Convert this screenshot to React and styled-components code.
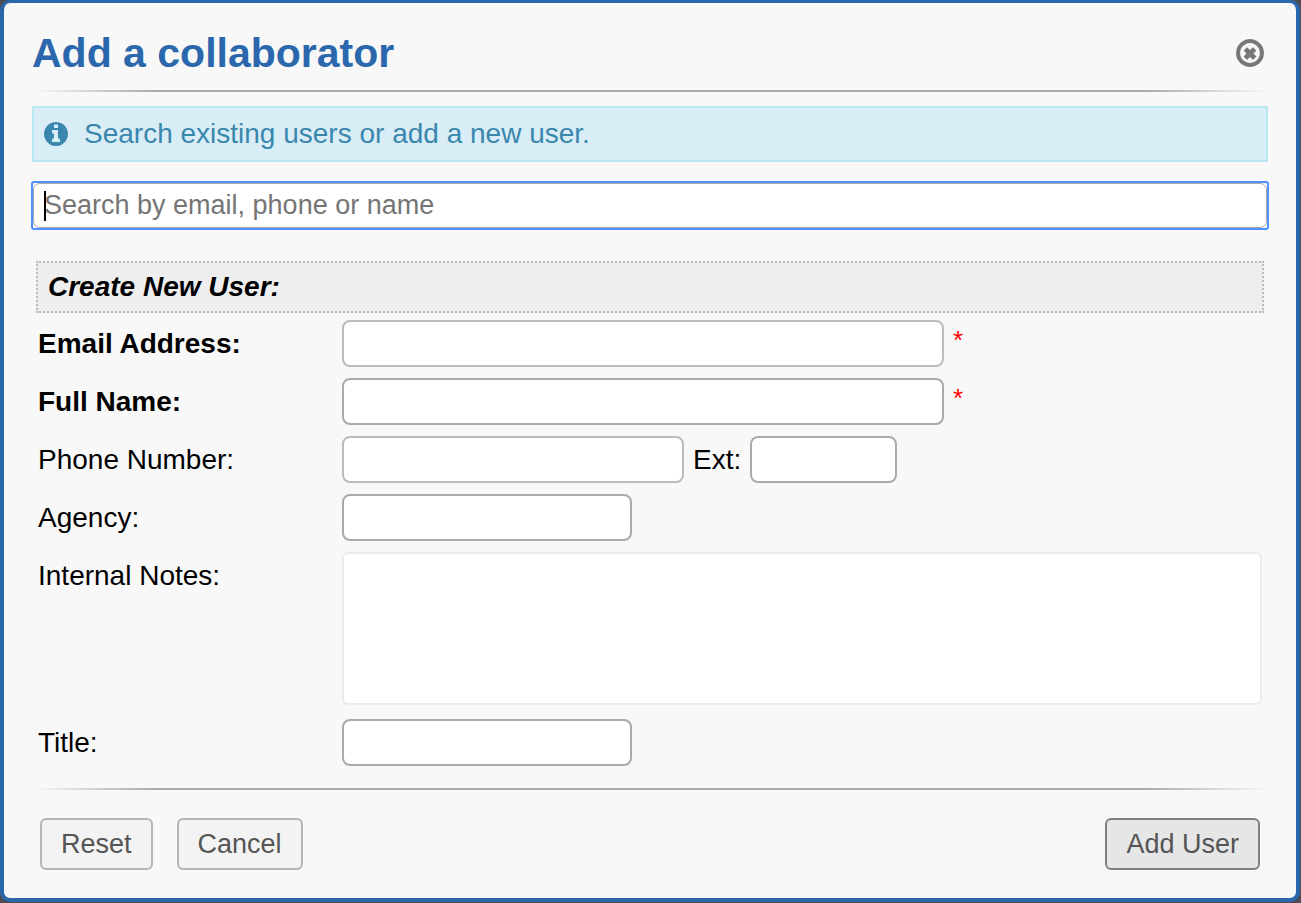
import React from 'react';
import styled, { createGlobalStyle } from 'styled-components';

const GlobalStyle = createGlobalStyle`
  * {
    box-sizing: border-box;
  }
  body {
    margin: 0;
    background: #4c4c52;
    color: #000;
    font-family: "Liberation Sans", Arial, sans-serif;
    font-size: 28px;
  }
`;

const Dialog = styled.div`
  margin: 0 1px 1px 0;
  padding: 24px 28px 28px;
  border: 4px solid #2a67ac;
  border-top-width: 3px;
  border-radius: 10px;
  background: #f8f8f8;
`;

const Header = styled.header`
  display: flex;
  align-items: center;
  justify-content: space-between;
  padding-right: 4px;
  height: 52px;
`;

const Title = styled.h3`
  margin: 0;
  color: #2a67ac;
  font-size: 41px;
  line-height: 52px;
`;

const CloseButton = styled.button`
  display: flex;
  padding: 0;
  border: 0;
  background: none;
  color: #777;
  cursor: pointer;
`;

const Divider = styled.hr`
  height: 2px;
  margin: ${props => props.$margin};
  border: 0;
  background: linear-gradient(to right, transparent, #aaa 10%, #aaa 90%, transparent);
`;

const Notice = styled.p`
  display: flex;
  align-items: center;
  gap: 16px;
  height: 56px;
  margin: 0 0 19px;
  padding: 0 10px;
  border: 2px solid #bce8f1;
  background: #d9edf7;
  color: #3a87ad;
`;

const SearchBox = styled.div`
  position: relative;
  margin: 0 -1px 31px;
  border: 2px solid #4d90fe;
  border-radius: 3px;
`;

const SearchInput = styled.input`
  display: block;
  width: 100%;
  height: 45px;
  padding: 0 10px;
  border: 1px solid #aaa;
  border-radius: 7px;
  background: #fff;
  font: 27px "Liberation Sans", Arial, sans-serif;
  outline: none;
  caret-color: transparent;
  &::placeholder {
    color: #757575;
  }
`;

const Caret = styled.span`
  position: absolute;
  top: 8px;
  left: 11px;
  width: 2px;
  height: 30px;
  background: #000;
`;

const Section = styled.h4`
  height: 52px;
  margin: 0 4px 7px;
  padding-left: 10px;
  border: 2px dotted #bbb;
  background: #eee;
  font-size: 28px;
  font-style: italic;
  line-height: 48px;
`;

const Fields = styled.div`
  display: flex;
  flex-direction: column;
  gap: 11px;
  padding: 0 6px;
`;

const Row = styled.div`
  display: grid;
  grid-template-columns: 304px 1fr;
`;

const Label = styled.label`
  font-weight: ${props => props.$required ? 'bold' : 'normal'};
  line-height: 47px;
`;

const Controls = styled.div`
  display: flex;
  gap: 9px;
`;

const Input = styled.input`
  width: ${props => props.$width};
  height: 47px;
  padding: 0 10px;
  border: 2px solid ${props => props.$light ? '#bbb' : '#aaa'};
  border-radius: 8px;
  background: #fff;
  font: 27px "Liberation Sans", Arial, sans-serif;
`;

const Notes = styled.textarea`
  width: 100%;
  height: 153px;
  margin-bottom: 3px;
  padding: 8px;
  border: 2px solid #ececec;
  border-radius: 6px;
  background: #fff;
  font: 27px "Liberation Sans", Arial, sans-serif;
  resize: none;
`;

const Asterisk = styled.span`
  color: #f00;
  font-size: 26px;
  line-height: 40px;
`;

const Footer = styled.footer`
  display: flex;
  justify-content: space-between;
  padding: 0 8px;
`;

const ButtonGroup = styled.div`
  display: flex;
  gap: 24px;
`;

const Button = styled.button`
  height: 52px;
  padding: 0 19px;
  border: 2px solid ${props => props.$primary ? '#808080' : '#b5b5b5'};
  border-radius: 6px;
  background: ${props => props.$primary ? '#e6e6e6' : '#f3f3f3'};
  color: #555;
  font: 27px "Liberation Sans", Arial, sans-serif;
  cursor: pointer;
`;

const InfoIcon = () => (
  <svg width="24" height="24" viewBox="128 128 1536 1536" fill="currentColor" aria-hidden="true">
    <path d="M1152 1376v-160q0-14-9-23t-23-9h-96v-512q0-14-9-23t-23-9h-320q-14 0-23 9t-9 23v160q0 14 9 23t23 9h96v320h-96q-14 0-23 9t-9 23v160q0 14 9 23t23 9h448q14 0 23-9t9-23zm-128-896v-160q0-14-9-23t-23-9h-192q-14 0-23 9t-9 23v160q0 14 9 23t23 9h192q14 0 23-9t9-23zm640 416q0 209-103 385.500t-279.500 279.500-385.500 103-385.500-103-279.500-279.500-103-385.500 103-385.500 279.500-279.500 385.500-103 385.500 103 279.500 279.500 103 385.500z" />
  </svg>
);

const CloseIcon = () => (
  <svg width="28" height="28" viewBox="128 128 1536 1536" fill="currentColor" aria-hidden="true">
    <path d="M1225 1111l-146 146q-10 10-23 10t-23-10l-137-137-137 137q-10 10-23 10t-23-10l-146-146q-10-10-10-23t10-23l137-137-137-137q-10-10-10-23t10-23l146-146q10-10 23-10t23 10l137 137 137-137q10-10 23-10t23 10l146 146q10 10 10 23t-10 23l-137 137 137 137q10 10 10 23t-10 23zm215-215q0-148-73-273t-198-198-273-73-273 73-198 198-73 273 73 273 198 198 273 73 273-73 198-198 73-273zm224 0q0 209-103 385.500t-279.500 279.500-385.500 103-385.500-103-279.500-279.500-103-385.500 103-385.500 279.500-279.500 385.500-103 385.500 103 279.500 279.500 103 385.500z" />
  </svg>
);

export default function App() {
  return (
    <>
      <GlobalStyle />
      <Dialog role="dialog" aria-labelledby="dialog-title">
        <Header>
          <Title id="dialog-title">Add a collaborator</Title>
          <CloseButton type="button" aria-label="Close">
            <CloseIcon />
          </CloseButton>
        </Header>
        <Divider $margin="11px 0 14px" />
        <Notice>
          <InfoIcon />
          Search existing users or add a new user.
        </Notice>
        <SearchBox>
          <SearchInput type="text" aria-label="Search users" placeholder="Search by email, phone or name" />
          <Caret />
        </SearchBox>
        <form>
          <Section>Create New User:</Section>
          <Fields>
            <Row>
              <Label htmlFor="email" $required>Email Address:</Label>
              <Controls>
                <Input id="email" type="email" $width="602px" $light />
                <Asterisk>*</Asterisk>
              </Controls>
            </Row>
            <Row>
              <Label htmlFor="name" $required>Full Name:</Label>
              <Controls>
                <Input id="name" type="text" $width="602px" />
                <Asterisk>*</Asterisk>
              </Controls>
            </Row>
            <Row>
              <Label htmlFor="phone">Phone Number:</Label>
              <Controls>
                <Input id="phone" type="tel" $width="342px" $light />
                <Label htmlFor="ext">Ext:</Label>
                <Input id="ext" type="text" $width="147px" />
              </Controls>
            </Row>
            <Row>
              <Label htmlFor="agency">Agency:</Label>
              <Controls>
                <Input id="agency" type="text" $width="290px" />
              </Controls>
            </Row>
            <Row>
              <Label htmlFor="notes">Internal Notes:</Label>
              <Notes id="notes" />
            </Row>
            <Row>
              <Label htmlFor="title">Title:</Label>
              <Controls>
                <Input id="title" type="text" $width="290px" />
              </Controls>
            </Row>
          </Fields>
          <Divider $margin="22px 0 28px" />
          <Footer>
            <ButtonGroup>
              <Button type="reset">Reset</Button>
              <Button type="button">Cancel</Button>
            </ButtonGroup>
            <Button type="submit" $primary>Add User</Button>
          </Footer>
        </form>
      </Dialog>
    </>
  );
}
